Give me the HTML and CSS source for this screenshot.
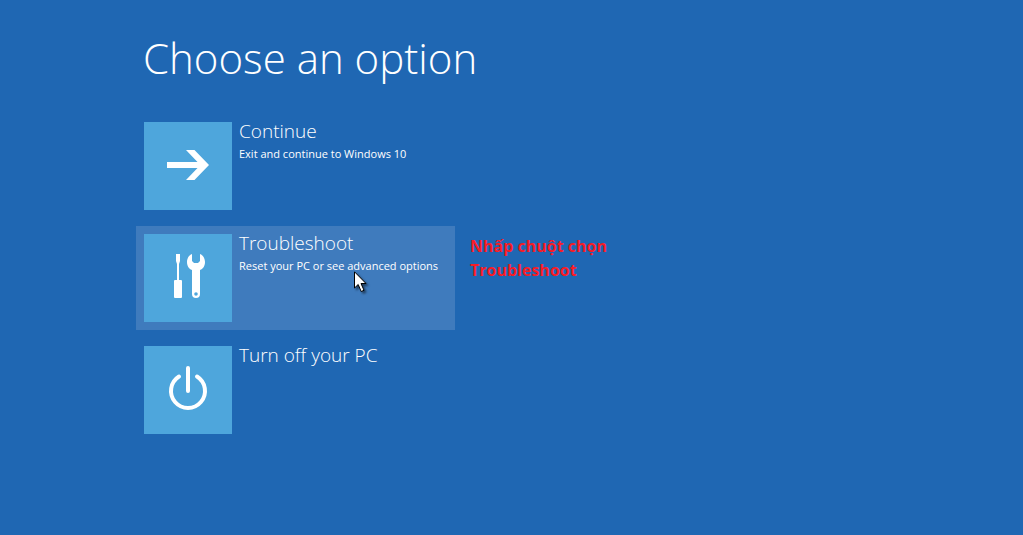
FILE: index.html
```html
<!DOCTYPE html>
<html lang="en">
<head>
<meta charset="utf-8">
<meta name="viewport" content="width=device-width, initial-scale=1">
<title>Choose an option</title>
<link rel="stylesheet" href="styles.css">
</head>
<body>
<main class="screen">
  <h1 class="heading">Choose an option</h1>
  <ul class="options">
    <li class="row">
      <button class="option" type="button">
        <span class="tile">
          <svg class="icon" viewBox="0 0 88 88" aria-hidden="true"><path d="M23 40H53.500L42 28H50.500L65 43L50.500 58H42L53.500 46H23Z"/></svg>
        </span>
        <span class="text">
          <span class="title">Continue</span>
          <span class="detail">Exit and continue to Windows 10</span>
        </span>
      </button>
    </li>
    <li class="row">
      <button class="option option-active" type="button">
        <span class="tile">
          <svg class="icon" viewBox="0 0 88 88" aria-hidden="true">
            <path d="M32 20H36V27L35 30V46H37Q38 46 38 47V63Q38 64 37 64H31Q30 64 30 63V47Q30 46 31 46H33V30L32 27Z"/>
            <path fill-rule="evenodd" d="M48 20V27L50 29H54L56 27V20C59 21 61 24.500 61 28C61 32 59 35 56 36V60A4 4 0 0 1 48 60V36C45 35 43 32 43 28C43 24.500 45 21 48 20ZM52 58.200A1.800 1.800 0 1 0 52 61.800A1.800 1.800 0 1 0 52 58.200Z"/>
          </svg>
        </span>
        <span class="text">
          <span class="title">Troubleshoot</span>
          <span class="detail">Reset your PC or see advanced options</span>
        </span>
      </button>
      <p class="note" lang="vi">Nhấp chuột chọn Troubleshoot</p>
      <svg class="pointer" viewBox="0 0 16 24" aria-hidden="true"><path d="M.5 .8V17L4.200 13.500L7.200 20.500L10 19.300L7 12.500H12Z"/></svg>
    </li>
    <li class="row">
      <button class="option" type="button">
        <span class="tile">
          <svg class="icon icon-line" viewBox="0 0 88 88" aria-hidden="true"><path d="M44 22V45M35 30.500A17 17 0 1 0 53 30.500"/></svg>
        </span>
        <span class="text">
          <span class="title">Turn off your PC</span>
        </span>
      </button>
    </li>
  </ul>
</main>
</body>
</html>
```
FILE: styles.css
```css
* {
  box-sizing: border-box;
}

body {
  margin: 0;
  min-height: 100vh;
  background: #1f67b3;
  color: #fff;
  font-family: "Open Sans", "Noto Sans", sans-serif;
}

.screen {
  padding: 28px 24px 24px 136px;
}

.heading {
  margin: 0 0 26px;
  padding-left: 7px;
  font-size: 42px;
  font-weight: 300;
  line-height: 60px;
}

.options {
  display: flex;
  flex-direction: column;
  gap: 8px;
  margin: 0;
  padding: 0;
  list-style: none;
}

.row {
  position: relative;
  display: flex;
  align-items: flex-start;
  gap: 15px;
}

.option {
  display: flex;
  align-items: flex-start;
  gap: 7px;
  width: 319px;
  padding: 8px;
  border: 0;
  background: transparent;
  color: inherit;
  font: inherit;
  text-align: left;
  white-space: nowrap;
}

.option-active {
  background: #3f7bbd;
}

.tile {
  flex: none;
  width: 88px;
  height: 88px;
  background: #4ea6dc;
}

.icon {
  display: block;
  width: 100%;
  fill: #fff;
}

.icon-line {
  fill: none;
  stroke: #fff;
  stroke-width: 4;
  stroke-linecap: round;
}

.text {
  display: flex;
  flex-direction: column;
  gap: 5px;
}

.title {
  font-size: 19px;
  font-weight: 300;
  line-height: 18px;
}

.detail {
  font-size: 11px;
  line-height: 18px;
}

.note {
  width: 160px;
  margin: 0;
  padding-top: 8px;
  color: #f81c26;
  font-size: 16px;
  font-weight: 700;
  line-height: 24px;
}

.pointer {
  position: absolute;
  top: 45px;
  left: 218px;
  width: 16px;
  height: 24px;
  fill: #fff;
  stroke: #000;
  filter: drop-shadow(2px 2px 1px rgb(0 0 0 / 50%));
}
```
